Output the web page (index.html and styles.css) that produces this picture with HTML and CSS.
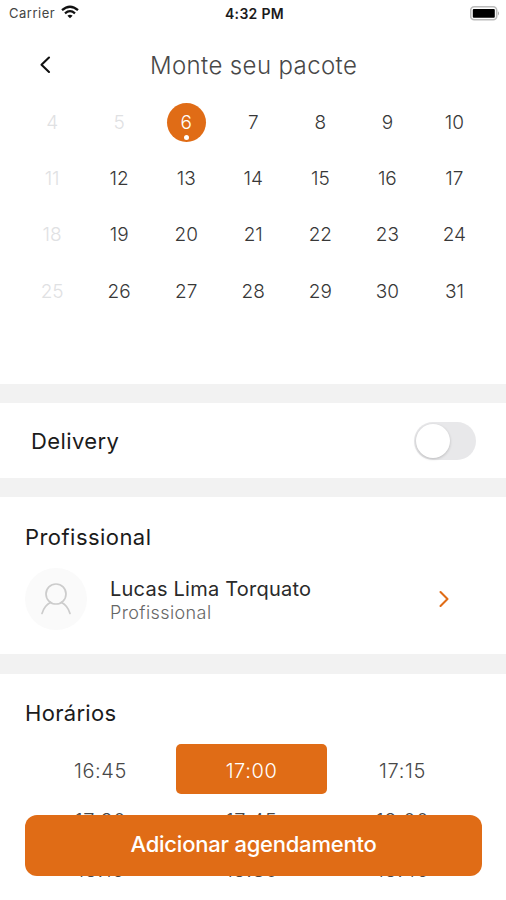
FILE: index.html
```html
<!DOCTYPE html>
<html lang="pt-BR">
<head>
<meta charset="utf-8">
<title>Monte seu pacote</title>
<link rel="stylesheet" href="styles.css">
</head>
<body>
<div class="app">
  <div class="status">
    <div class="carrier"><span>Carrier</span>
      <svg class="wifi" width="18" height="14" viewBox="0 0 18 14" fill="none" stroke="#111" stroke-width="2.3"><path d="M1 5.2Q9-1.8 17 5.2"/><path d="M4 8.3Q9 4 14 8.3"/><path d="M9 13.2L6.4 10.7Q9 8.8 11.6 10.7Z" fill="#111" stroke="none"/></svg>
    </div>
    <div class="clock">4:32 PM</div>
    <svg class="battery" width="30" height="15" viewBox="0 0 30 15"><rect x=".7" y=".8" width="26" height="13" rx="3.5" fill="#fff" stroke="#bbb" stroke-width="1.6"/><rect x="2.8" y="3" width="22" height="8.8" rx="1" fill="#000"/><path d="M28 5.2q2 2.1 0 4.2z" fill="#aaa"/></svg>
  </div>
  <header class="header">
    <svg class="back" width="14" height="20" viewBox="0 0 14 20" fill="none" stroke="#111" stroke-width="2.1" stroke-linecap="round" stroke-linejoin="round"><path d="M11 1.500L3.500 8.800l7.500 7.200"/></svg>
    <h1>Monte seu pacote</h1>
  </header>
  <div class="calendar">
    <span class="off">4</span><span class="off">5</span><span class="picked"><b>6</b></span><span>7</span><span>8</span><span>9</span><span>10</span>
    <span class="off">11</span><span>12</span><span>13</span><span>14</span><span>15</span><span>16</span><span>17</span>
    <span class="off">18</span><span>19</span><span>20</span><span>21</span><span>22</span><span>23</span><span>24</span>
    <span class="off">25</span><span>26</span><span>27</span><span>28</span><span>29</span><span>30</span><span>31</span>
  </div>
  <section class="delivery">
    <span class="label">Delivery</span>
    <span class="switch"><i></i></span>
  </section>
  <section class="pro">
    <h2>Profissional</h2>
    <div class="person">
      <div class="avatar"><svg width="32" height="34" viewBox="0 0 32 34" fill="none" stroke="#ccc" stroke-width="1.7" stroke-linecap="round"><circle cx="16" cy="12" r="10"/><path d="M2 31.500Q4.500 23.500 10.500 20.600M21.500 20.600Q27.500 23.500 30 31.500"/></svg></div>
      <div class="who"><div class="name">Lucas Lima Torquato</div><div class="role">Profissional</div></div>
      <svg class="next" width="12" height="20" viewBox="0 0 12 20" fill="none" stroke="#e06c16" stroke-width="2.1" stroke-linecap="round" stroke-linejoin="round"><path d="M2.500 3L9.500 10l-7 7"/></svg>
    </div>
  </section>
  <section class="hours">
    <h2>Horários</h2>
    <div class="slots">
      <span>16:45</span><span class="on">17:00</span><span>17:15</span>
      <span>17:30</span><span>17:45</span><span>18:00</span>
      <span>18:15</span><span>18:30</span><span>18:45</span>
    </div>
  </section>
  <button class="cta">Adicionar agendamento</button>
</div>
</body>
</html>
```
FILE: styles.css
```css
* { box-sizing: border-box; }
body { margin: 0; background: #fff; font-family: Inter, "Liberation Sans", sans-serif; color: #1b1b1b; }
h1, h2 { margin: 0; }
.app { position: relative; width: 506px; height: 900px; overflow: hidden; display: flex; flex-direction: column; }
.status { height: 27px; display: grid; grid-template-columns: 1fr auto 1fr; align-items: center; padding: 0 6px 1px 9px; }
.carrier { display: flex; align-items: center; gap: 6px; font-size: 13px; letter-spacing: .5px; color: #444; }
.wifi { display: block; margin-top: -3px; }
.clock { font-size: 14px; font-weight: 600; letter-spacing: .3px; }
.battery { justify-self: end; }
.header { height: 67px; display: flex; align-items: center; padding: 10px 0 0 38px; }
.header h1 { margin-left: 98px; font-size: 24px; font-weight: 300; letter-spacing: .38px; line-height: 30px; color: #484848; white-space: nowrap; }
.calendar { height: 290px; padding: 0 18px 0 18.600px; display: grid; grid-template-columns: repeat(7, 67.050px); grid-auto-rows: 56.300px; font-size: 19px; font-weight: 300; color: #383838; }
.calendar span { display: flex; align-items: center; justify-content: center; }
.calendar .off { color: #dfe1e3; }
.calendar b { position: relative; width: 39px; height: 39px; border-radius: 50%; background: #e06c16; color: #fff; font-weight: 300; display: flex; align-items: center; justify-content: center; }
.calendar b::after { content: ""; position: absolute; left: 17px; bottom: 2px; width: 5px; height: 5px; border-radius: 50%; background: #fff; }
.delivery { height: 113px; border-top: 19px solid #f2f2f2; border-bottom: 19px solid #f2f2f2; display: flex; align-items: center; justify-content: space-between; padding: 0 30px 0 31px; }
.label { font-size: 22px; letter-spacing: .4px; }
.switch { width: 62px; height: 38px; border-radius: 19px; background: #e8e8ea; padding: 2px; }
.switch i { display: block; width: 34px; height: 34px; border-radius: 50%; background: #fff; box-shadow: 0 1px 3px rgba(0,0,0,.2); }
.pro { height: 177px; padding: 26px 25px 0; border-bottom: 20px solid #f2f2f2; }
h2 { font-size: 22px; font-weight: 400; line-height: 28px; letter-spacing: .3px; }
.pro h2 { letter-spacing: .45px; }
.person { display: flex; align-items: center; height: 62px; margin-top: 17px; }
.avatar { width: 62px; height: 62px; border-radius: 50%; background: #fafafa; display: flex; align-items: center; justify-content: center; }
.who { margin-left: 23px; padding-top: 4px; flex: 1; }
.name { font-size: 20px; line-height: 23px; letter-spacing: .23px; color: #2a2a2a; }
.role { font-size: 18px; font-weight: 300; line-height: 23px; letter-spacing: .4px; color: #666; }
.next { margin-right: 31px; }
.hours { padding: 25px 25px 0; }
.slots { display: grid; grid-template-columns: repeat(3, 151px); grid-auto-rows: 50px; margin-top: 17px; font-size: 20px; font-weight: 300; letter-spacing: .6px; color: #484848; }
.slots span { display: flex; align-items: center; justify-content: center; padding-top: 3px; }
.slots span:nth-child(n+4) { padding-top: 4px; }
.slots span:nth-child(n+7) { padding-top: 2px; }
.slots .on { background: #e06c16; color: #fff; border-radius: 5px; }
.cta { position: absolute; left: 25px; top: 815px; width: 457px; height: 61px; border: 0; border-radius: 12px; background: #e06c16; color: #fff; font: 500 22px Inter, sans-serif; letter-spacing: -.23px; padding: 0 0 3px; }
```
